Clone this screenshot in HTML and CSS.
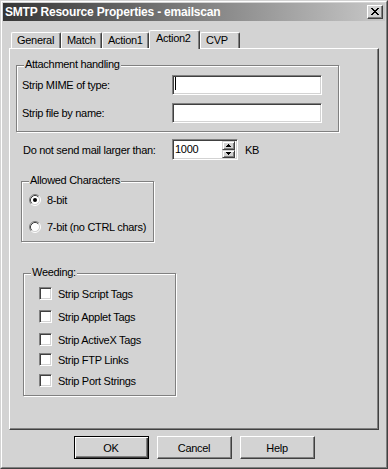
FILE: index.html
```html
<!DOCTYPE html>
<html>
<head>
<meta charset="utf-8">
<link rel="stylesheet" href="styles.css">
</head>
<body>
<div class="window">
  <div class="frame">
    <div class="titlebar">
      <span class="title">SMTP Resource Properties - emailscan</span>
      <span class="close"><svg width="8" height="7" viewBox="0 0 8 7" shape-rendering="crispEdges"><path d="M0 0h2v1H0zM6 0h2v1H6zM1 1h2v1H1zM5 1h2v1H5zM2 2h4v1H2zM3 3h2v1H3zM2 4h4v1H2zM1 5h2v1H1zM5 5h2v1H5zM0 6h2v1H0zM6 6h2v1H6z" fill="#000"/></svg></span>
    </div>
    <div class="client">
      <div class="tabs">
        <div class="tab t-general">General</div>
        <div class="tab t-match">Match</div>
        <div class="tab t-action1">Action1</div>
        <div class="tab active t-action2">Action2</div>
        <div class="tab t-cvp">CVP</div>
      </div>
      <div class="panel">
        <div class="group g-attach">
          <span class="legend">Attachment handling</span>
          <div class="field-row">
            <span class="field-label">Strip MIME of type:</span>
            <div class="edit"><span class="caret"></span></div>
          </div>
          <div class="field-row">
            <span class="field-label">Strip file by name:</span>
            <div class="edit"></div>
          </div>
        </div>
        <div class="size-row">
          <span class="size-label">Do not send mail larger than:</span>
          <div class="spin">
            <span class="spin-value">1000</span>
            <div class="updown">
              <span class="ud"><svg width="5" height="3" viewBox="0 0 5 3" shape-rendering="crispEdges"><path d="M2 0h1v1H2zM1 1h3v1H1zM0 2h5v1H0z" fill="#000"/></svg></span>
              <span class="ud"><svg width="5" height="3" viewBox="0 0 5 3" shape-rendering="crispEdges"><path d="M0 0h5v1H0zM1 1h3v1H1zM2 2h1v1H2z" fill="#000"/></svg></span>
            </div>
          </div>
          <span class="unit">KB</span>
        </div>
        <div class="group g-chars">
          <span class="legend">Allowed Characters</span>
          <div class="radio-row">
            <svg class="radio" width="12" height="12" viewBox="0 0 12 12">
              <circle cx="6" cy="6" r="4.5" fill="#fff"/>
              <path d="M2.11 9.89A5.5 5.5 0 0 1 9.89 2.11" stroke="#808080" fill="none"/>
              <path d="M9.89 2.11A5.5 5.5 0 0 1 2.11 9.89" stroke="#fff" fill="none"/>
              <path d="M2.82 9.18A4.5 4.5 0 0 1 9.18 2.82" stroke="#404040" fill="none"/>
              <path d="M9.18 2.82A4.5 4.5 0 0 1 2.82 9.18" stroke="#d3d3d3" fill="none"/>
              <circle cx="6" cy="6" r="2" fill="#000"/>
            </svg>
            <span>8-bit</span>
          </div>
          <div class="radio-row">
            <svg class="radio" width="12" height="12" viewBox="0 0 12 12">
              <circle cx="6" cy="6" r="4.5" fill="#fff"/>
              <path d="M2.11 9.89A5.5 5.5 0 0 1 9.89 2.11" stroke="#808080" fill="none"/>
              <path d="M9.89 2.11A5.5 5.5 0 0 1 2.11 9.89" stroke="#fff" fill="none"/>
              <path d="M2.82 9.18A4.5 4.5 0 0 1 9.18 2.82" stroke="#404040" fill="none"/>
              <path d="M9.18 2.82A4.5 4.5 0 0 1 2.82 9.18" stroke="#d3d3d3" fill="none"/>
            </svg>
            <span>7-bit (no CTRL chars)</span>
          </div>
        </div>
        <div class="group g-weed">
          <span class="legend">Weeding:</span>
          <div class="check-row"><span class="check"></span><span>Strip Script Tags</span></div>
          <div class="check-row"><span class="check"></span><span>Strip Applet Tags</span></div>
          <div class="check-row"><span class="check"></span><span>Strip ActiveX Tags</span></div>
          <div class="check-row"><span class="check"></span><span>Strip FTP Links</span></div>
          <div class="check-row"><span class="check"></span><span>Strip Port Strings</span></div>
        </div>
      </div>
      <div class="buttons">
        <div class="btn default">OK</div>
        <div class="btn">Cancel</div>
        <div class="btn">Help</div>
      </div>
    </div>
  </div>
</div>
</body>
</html>
```
FILE: styles.css
```css
* { box-sizing: border-box; }
html, body { margin: 0; padding: 0; background: #d3d3d3; }
body {
  font-family: "Liberation Sans", Arial, sans-serif;
  font-size: 11px;
  letter-spacing: -0.3px;
  color: #000;
}
.window {
  width: 388px;
  height: 469px;
  border: 1px solid;
  border-color: #d3d3d3 #404040 #404040 #d3d3d3;
  background: #d3d3d3;
}
.frame {
  height: 100%;
  border: 1px solid;
  border-color: #fff #808080 #808080 #fff;
  padding: 1px;
}
.titlebar {
  height: 18px;
  display: flex;
  align-items: center;
  justify-content: space-between;
  padding: 0 2px;
  background: linear-gradient(to right, #363636, #c8c8c8);
}
.title {
  color: #fff;
  font-weight: bold;
  font-size: 12px;
  letter-spacing: -0.2px;
}
.close {
  width: 16px;
  height: 14px;
  background: #d3d3d3;
  border: 1px solid;
  border-color: #fff #404040 #404040 #fff;
  box-shadow: inset -1px -1px #808080;
  display: flex;
  align-items: center;
  justify-content: center;
  padding: 0 1px 1px 0;
}
.close svg { display: block; }
.client { padding: 9px 6px 0 6px; }

.tabs {
  display: flex;
  height: 18px;
  padding-left: 2px;
  position: relative;
  z-index: 1;
}
.tab {
  margin-top: 2px;
  height: 16px;
  border-top: 1px solid #fff;
  border-left: 1px solid #fff;
  border-right: 1px solid #404040;
  box-shadow: inset -1px 0 #808080;
  border-radius: 2px 2px 0 0;
  padding-left: 5px;
  line-height: 14px;
  background: #d3d3d3;
}
.t-general { width: 50px; }
.t-match { width: 41px; }
.t-action1 { width: 47px; }
.t-action2 { width: 51px; }
.t-cvp { width: 40px; }
.tab.active {
  margin-top: 0;
  height: 19px;
  padding-left: 6px;
}

.panel {
  height: 382px;
  border: 1px solid;
  border-color: #fff #404040 #404040 #fff;
  box-shadow: inset -1px -1px #808080;
}

.group {
  position: relative;
  border: 1px solid #808080;
  box-shadow: 1px 1px 0 #fff, inset 1px 1px 0 #fff;
}
.legend {
  position: absolute;
  left: 7px;
  top: -8px;
  padding: 0 1px;
  line-height: 13px;
  background: #d3d3d3;
}

.g-attach {
  margin: 16px 0 0 6px;
  width: 323px;
  height: 67px;
  padding: 9px 0 0 5px;
}
.field-row {
  display: flex;
  align-items: center;
  height: 20px;
}
.field-row + .field-row { margin-top: 8px; }
.field-label { width: 150px; }
.edit {
  width: 150px;
  height: 20px;
  background: #fff;
  border: 1px solid;
  border-color: #808080 #fff #fff #808080;
  box-shadow: inset 1px 1px #404040, inset -1px -1px #d3d3d3;
  padding: 1px 0 0 2px;
}
.caret {
  display: block;
  width: 1px;
  height: 13px;
  background: #000;
}

.size-row {
  display: flex;
  align-items: center;
  height: 21px;
  margin: 7px 0 0 13px;
}
.size-label { width: 149px; }
.spin {
  width: 66px;
  height: 21px;
  display: flex;
  background: #fff;
  border: 1px solid;
  border-color: #808080 #fff #fff #808080;
  box-shadow: inset 1px 1px #404040, inset -1px -1px #d3d3d3;
  padding: 1px 2px 1px 1px;
}
.spin-value {
  flex: 1;
  line-height: 17px;
  padding-left: 1px;
}
.updown {
  width: 13px;
  display: flex;
  flex-direction: column;
}
.ud {
  flex: 1;
  background: #d3d3d3;
  border: 1px solid;
  border-color: #d3d3d3 #404040 #404040 #d3d3d3;
  box-shadow: inset 1px 1px #fff, inset -1px -1px #808080;
  display: flex;
  align-items: center;
  justify-content: center;
}
.ud svg { display: block; }
.unit { margin-left: 7px; }

.g-chars {
  margin: 21px 0 0 11px;
  width: 133px;
  height: 61px;
  padding: 12px 0 0 7px;
}
.radio-row {
  display: flex;
  align-items: center;
  gap: 6px;
  height: 12px;
}
.radio-row + .radio-row { margin-top: 15px; }
.radio { display: block; flex: none; }

.g-weed {
  margin: 31px 0 0 13px;
  width: 153px;
  height: 123px;
  padding: 13px 0 0 15px;
}
.check-row {
  display: flex;
  align-items: center;
  gap: 6px;
  height: 13px;
}
.check-row:nth-child(3) { margin-top: 10px; }
.check-row:nth-child(4) { margin-top: 10px; }
.check-row:nth-child(5) { margin-top: 7px; }
.check-row:nth-child(6) { margin-top: 8px; }
.check {
  width: 13px;
  height: 13px;
  flex: none;
  background: #fff;
  border: 1px solid;
  border-color: #808080 #fff #fff #808080;
  box-shadow: inset 1px 1px #404040, inset -1px -1px #d3d3d3;
}

.buttons {
  display: flex;
  justify-content: center;
  gap: 8px;
  margin-top: 6px;
}
.btn {
  width: 75px;
  height: 23px;
  border: 1px solid;
  border-color: #fff #404040 #404040 #fff;
  box-shadow: inset -1px -1px #808080;
  display: flex;
  align-items: center;
  justify-content: center;
}
.btn.default {
  border-color: #000;
  box-shadow: inset 1px 1px #fff, inset -1px -1px #404040, inset -2px -2px #808080;
}
```
